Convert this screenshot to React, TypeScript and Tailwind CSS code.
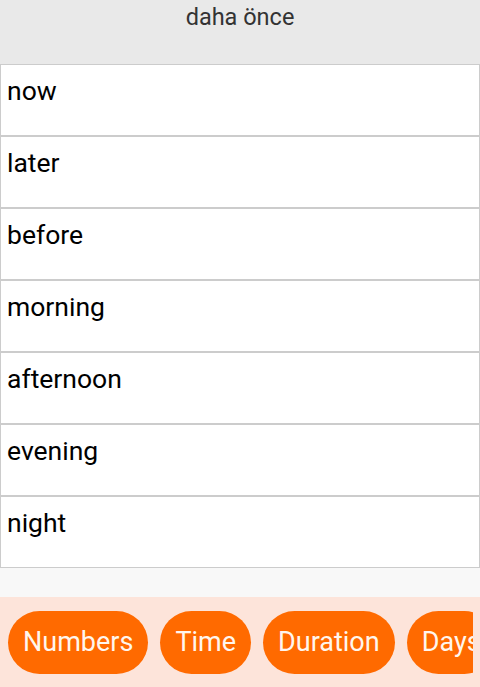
import React from 'react';

const words = ['now', 'later', 'before', 'morning', 'afternoon', 'evening', 'night'];
const tabs = ['Numbers', 'Time', 'Duration', 'Days'];

export default function App() {
    return (
        <div className="w-[480px] h-[687px] flex flex-col bg-[#f8f8f8] font-['Roboto',sans-serif] overflow-hidden">
            {/* Header */}
            <div className="h-[64px] shrink-0 bg-[#e9e9e9] flex justify-center pt-[3px]">
                <span className="text-[23.5px] leading-[28px] text-[#333333]">daha önce</span>
            </div>

            {/* Word list */}
            <div className="flex flex-col">
                {words.map((w) => (
                    <div
                        key={w}
                        className="h-[72px] border border-[#cccccc] bg-white pl-[6px] pt-[10px] text-[26.5px] leading-[32px] text-black"
                    >
                        {w}
                    </div>
                ))}
            </div>

            <div className="flex-1" />

            <div className="h-[90px] shrink-0 bg-[#fde4da] flex items-center">
                <div className="flex gap-[12px] overflow-hidden w-[473px] pl-[8px]">
                    {tabs.map((t) => (
                        <div
                            key={t}
                            className="h-[63px] shrink-0 rounded-full bg-[#ff6a00] px-[15px] flex items-center text-[27px] text-[#fff6ee]"
                        >
                            {t}
                        </div>
                    ))}
                </div>
            </div>
        </div>
    );
}
